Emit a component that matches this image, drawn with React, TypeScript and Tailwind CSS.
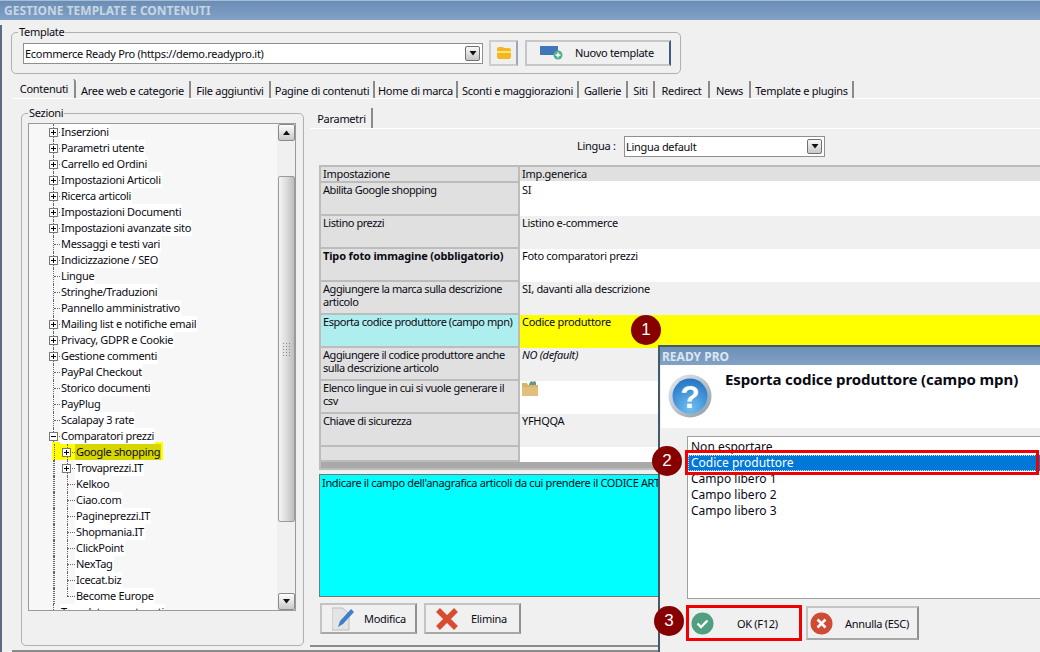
const treeItems = [
  { label: "Inserzioni", box: "plus" },
  { label: "Parametri utente", box: "plus" },
  { label: "Carrello ed Ordini", box: "plus" },
  { label: "Impostazioni Articoli", box: "plus" },
  { label: "Ricerca articoli", box: "plus" },
  { label: "Impostazioni Documenti", box: "plus" },
  { label: "Impostazioni avanzate sito", box: "plus" },
  { label: "Messaggi e testi vari" },
  { label: "Indicizzazione / SEO", box: "plus" },
  { label: "Lingue" },
  { label: "Stringhe/Traduzioni" },
  { label: "Pannello amministrativo" },
  { label: "Mailing list e notifiche email", box: "plus" },
  { label: "Privacy, GDPR e Cookie", box: "plus" },
  { label: "Gestione commenti", box: "plus" },
  { label: "PayPal Checkout" },
  { label: "Storico documenti" },
  { label: "PayPlug" },
  { label: "Scalapay 3 rate" },
  { label: "Comparatori prezzi", box: "minus" },
  { label: "Google shopping", box: "plus", child: true, mark: true },
  { label: "Trovaprezzi.IT", box: "plus", child: true },
  { label: "Kelkoo", child: true },
  { label: "Ciao.com", child: true },
  { label: "Pagineprezzi.IT", child: true },
  { label: "Shopmania.IT", child: true },
  { label: "ClickPoint", child: true },
  { label: "NexTag", child: true },
  { label: "Icecat.biz", child: true },
  { label: "Become Europe", child: true, last: true },
  { label: "Template e contenuti" },
];

const topTabs = [
  { label: "Aree web e categorie", w: "w-[115px]" },
  { label: "File aggiuntivi", w: "w-[80px]" },
  { label: "Pagine di contenuti", w: "w-[104px]" },
  { label: "Home di marca", w: "w-[83px]" },
  { label: "Sconti e maggiorazioni", w: "w-[121px]" },
  { label: "Gallerie", w: "w-[49px]" },
  { label: "Siti", w: "w-[27px]" },
  { label: "Redirect", w: "w-[55px]" },
  { label: "News", w: "w-[41px]" },
  { label: "Template e plugins", w: "w-[103px]" },
];

function TreeBox({ kind }: { kind: string }) {
  return (
    <span className="absolute left-[-5px] top-[4px] z-10 flex h-[9px] w-[9px] items-center justify-center border border-[#777] bg-white">
      <span className="absolute h-px w-[5px] bg-black" />
      {kind === "plus" && <span className="absolute h-[5px] w-px bg-black" />}
    </span>
  );
}

function TreeRow({ item }: { item: (typeof treeItems)[number] }) {
  return (
    <div className="relative flex h-4 shrink-0 bg-[#f7f7f7] pl-[24px]">
      <div className="w-[1px] shrink-0 border-l border-dotted border-[#666]" />
      {item.mark && (
        <div className="absolute left-[23px] top-[-2px] h-[19px] w-[111px] bg-[#ffff00]" />
      )}
      <div className="relative z-10 flex">
        {item.child ? (
          <>
            <div className="w-[13px] border-l border-dotted border-[#666]" />
            <div className={"relative w-[8px] " + (item.last ? "h-2" : "")}>
              <div className="absolute left-0 top-0 h-full border-l border-dotted border-[#666]" />
              <div className="absolute left-0 top-2 w-[8px] border-t border-dotted border-[#666]" />
              {item.box && <TreeBox kind={item.box} />}
            </div>
          </>
        ) : (
          <div className="relative w-[6px]">
            <div className="absolute left-0 top-2 w-[6px] border-t border-dotted border-[#666]" />
            {item.box && <TreeBox kind={item.box} />}
          </div>
        )}
        <span
          className={
            "h-4 px-[1px] text-[11px] leading-[16px] " +
            (item.mark ? "bg-[#d6d600]" : "bg-white")
          }
        >
          {item.label}
        </span>
      </div>
    </div>
  );
}

function Arrow({ down }: { down?: boolean }) {
  return (
    <svg width="9" height="5" viewBox="0 0 9 5">
      <path d={down ? "M1 0h7L4.5 4.5z" : "M1 5h7L4.5.5z"} fill="#111" />
    </svg>
  );
}

function ScrollButton({ down }: { down?: boolean }) {
  return (
    <div className="flex h-[17px] w-[17px] shrink-0 items-center justify-center rounded-[2px] border border-[#8a8a8a] bg-gradient-to-b from-[#fdfdfd] to-[#c9c9c9]">
      <Arrow down={down} />
    </div>
  );
}

function Scrollbar() {
  return (
    <div className="flex w-[18px] shrink-0 flex-col bg-[#f0f0f0] pl-px">
      <ScrollButton />
      <div className="h-[35px] shrink-0" />
      <div className="relative flex h-[346px] shrink-0 items-center justify-center rounded-[2px] border border-[#9a9a9a] bg-gradient-to-r from-[#f4f4f4] via-[#dcdcdc] to-[#bdbdbd]">
        <div className="grid grid-cols-3 gap-[2px]">
          {Array.from({ length: 15 }).map((_, i) => (
            <span key={i} className="h-px w-px bg-[#888]" />
          ))}
        </div>
      </div>
      <div className="flex-1" />
      <ScrollButton down />
    </div>
  );
}

function Combo({ text, className }: { text: string; className: string }) {
  return (
    <div className={"flex items-center justify-between border border-[#8e8f8f] bg-white pl-[1px] pr-[2px] " + className}>
      <span className="text-[11px] leading-none">{text}</span>
      <div className="flex h-[15px] w-[15px] items-center justify-center rounded-[2px] border border-[#707070] bg-gradient-to-b from-[#f8f8f8] to-[#c8c8c8]">
        <svg width="8" height="5" viewBox="0 0 8 5">
          <path d="M.5 0h7L4 4.5z" fill="#111" />
        </svg>
      </div>
    </div>
  );
}

function Badge({ n, className }: { n: number; className: string }) {
  return (
    <div
      className={
        "absolute z-30 flex h-[30px] w-[30px] items-center justify-center rounded-full bg-[#860000] font-['Liberation_Sans',sans-serif] text-[17px] tracking-normal text-white " +
        className
      }
    >
      {n}
    </div>
  );
}

const rows = [
  { a: "Abilita Google shopping", b: "SI", bg: "bg-white" },
  { a: "Listino prezzi", b: "Listino e-commerce", bg: "bg-[#f0f0f0]" },
  { a: "Tipo foto immagine (obbligatorio)", b: "Foto comparatori prezzi", bg: "bg-white", bold: true },
  { a: "Aggiungere la marca sulla descrizione articolo", b: "SI, davanti alla descrizione", bg: "bg-[#f0f0f0]" },
  { a: "Esporta codice produttore (campo mpn)", b: "Codice produttore", bg: "bg-[#ffff00]", on: true },
  { a: "Aggiungere il codice produttore anche sulla descrizione articolo", b: "NO (default)", bg: "bg-[#f0f0f0]", italic: true },
  { a: "Elenco lingue in cui si vuole generare il csv", b: "", bg: "bg-white", folder: true },
  { a: "Chiave di sicurezza", b: "YFHQQA", bg: "bg-[#f0f0f0]" },
];

function FolderTools() {
  return (
    <svg width="16" height="15" viewBox="0 0 16 15">
      <path d="M7 3l2-3 2 1 1-1 2 1v3H7z" fill="#5e9a8e" />
      <path d="M0 2h5l1 2h10v11H0z" fill="#d9b26c" />
      <path d="M0 6h16v9H0z" fill="#e3bf7c" />
    </svg>
  );
}

function ParamTable() {
  return (
    <div className="w-[740px] border-2 border-[#bcbcbc] bg-[#bcbcbc]">
      <div className="grid grid-cols-[199px_1fr]">
        <div className="h-[16px] border-r-2 border-b-2 border-[#bcbcbc] bg-[#e0e0e0] pl-[2px] leading-[13px]">Impostazione</div>
        <div className="h-[16px] border-b-2 border-white bg-[#e0e0e0] pl-[2px] leading-[13px]">Imp.generica</div>
        {rows.map((r) => (
          <div key={r.a} className="contents">
            <div
              className={
                "h-[33px] border-r-2 border-b-2 border-[#bcbcbc] pl-[2px] leading-[13px] " +
                (r.on ? "bg-[#afeeee] " : "bg-[#e0e0e0] ") +
                (r.bold ? "font-bold tracking-[-0.15px]" : "tracking-[-0.45px]")
              }
            >
              {r.a}
            </div>
            <div className={"h-[33px] pl-[2px] leading-[13px] " + r.bg + (r.italic ? " italic" : "")}>
              {r.folder ? <FolderTools /> : r.b}
            </div>
          </div>
        ))}
        <div className="h-[15px] border-r-2 border-b-2 border-[#bcbcbc] bg-[#e0e0e0]" />
        <div className="h-[15px] bg-white" />
      </div>
      <div className="h-[6px] bg-[#a9a9a9]" />
    </div>
  );
}

function PushButton({ label, icon, className, textClass }: { label: string; icon: React.ReactNode; className: string; textClass: string }) {
  return (
    <div className={"flex items-center border-2 border-[#c4c4c4] border-r-[#8f8f8f] border-b-[#a8a8a8] bg-[#f0f0f0] " + className}>
      {icon}
      <span className={"text-[11px] leading-none " + textClass}>{label}</span>
    </div>
  );
}

function GroupBox({ title, className, children }: { title: string; className: string; children: React.ReactNode }) {
  return (
    <fieldset className={"rounded-[5px] border border-[#b0b0b0] " + className}>
      <legend className="ml-[6px] px-[1px] text-[11px] leading-[14px]">{title}</legend>
      {children}
    </fieldset>
  );
}

function QuestionIcon() {
  return (
    <svg width="44" height="44" viewBox="0 0 44 44">
      <defs>
        <linearGradient id="ring" x1="0" y1="0" x2="1" y2="1">
          <stop offset="0" stopColor="#e8edf2" />
          <stop offset="1" stopColor="#8b9aa8" />
        </linearGradient>
        <radialGradient id="ball" cx="0.5" cy="0.85" r="0.9">
          <stop offset="0" stopColor="#6fc0f2" />
          <stop offset="1" stopColor="#1f6fc2" />
        </radialGradient>
      </defs>
      <circle cx="22" cy="22" r="21.5" fill="url(#ring)" />
      <circle cx="22" cy="22" r="17.5" fill="url(#ball)" />
      <text x="22" y="34" textAnchor="middle" fontSize="32" fontWeight="700" fill="#fff" style={{ fontFamily: "'Liberation Sans', sans-serif" }}>
        ?
      </text>
    </svg>
  );
}

function Dialog() {
  return (
    <div className="absolute left-[658px] top-[345px] z-20 flex h-[320px] w-[400px] flex-col border-l-2 border-t-2 border-[#46596b] bg-[#f0f0f0] tracking-normal">
      <div className="flex h-[18px] shrink-0 items-center bg-gradient-to-b from-[#6c8fb6] to-[#82a2c5] pl-[2px] pt-[2px] text-[12px] font-bold text-[#dbe6f0]">
        READY PRO
      </div>
      <div className="ml-[1px] flex h-[63px] shrink-0 bg-white">
        <div className="ml-[7px] mt-[9px]">
          <QuestionIcon />
        </div>
        <div className="ml-[13px] mt-[5px] text-[15px] font-bold leading-[18px] tracking-[-0.1px]">Esporta codice produttore (campo mpn)</div>
      </div>
      <div className="relative ml-[27px] mt-[8px] h-[163px] shrink-0 border border-[#a0a0a0] bg-white pt-[2px] text-[12px]">
        <div className="h-4 pl-[3px] leading-[16px]">Non esportare</div>
        <div className="h-4 border border-dotted border-[#d0e4f8] bg-[#0078d7] pl-[2px] leading-[14px] text-white">Codice produttore</div>
        <div className="h-4 pl-[3px] leading-[16px]">Campo libero 1</div>
        <div className="h-4 pl-[3px] leading-[16px]">Campo libero 2</div>
        <div className="h-4 pl-[3px] leading-[16px]">Campo libero 3</div>
        <div className="absolute left-[-3px] top-[13px] h-[25px] w-[354px] border-[3px] border-[#f00000]" />
      </div>
      <div className="ml-[26px] mt-[6px] flex items-center tracking-[-0.3px]">
        <div className="border-[3px] border-[#f00000]">
          <div className="flex h-[30px] w-[110px] items-center bg-[#f0f0f0] pl-[2px]">
            <svg width="23" height="23" viewBox="0 0 23 23">
              <circle cx="11.5" cy="11.5" r="11" fill="#4f9f80" />
              <path d="M6.5 11.5l3.5 3.5 6.5-6.5" fill="none" stroke="#fff" strokeWidth="2.4" />
            </svg>
            <span className="ml-[23px] text-[11px] leading-none">OK (F12)</span>
          </div>
        </div>
        <PushButton
          className="ml-[4px] h-[34px] w-[113px] pl-[2px]"
          textClass="ml-[12px]"
          label="Annulla (ESC)"
          icon={
            <svg width="23" height="23" viewBox="0 0 23 23">
              <circle cx="11.5" cy="11.5" r="11" fill="#cf4b33" />
              <path d="M7.5 7.5l8 8M15.5 7.5l-8 8" fill="none" stroke="#fff" strokeWidth="2.6" />
            </svg>
          }
        />
      </div>
    </div>
  );
}

export default function App() {
  return (
    <div className="relative h-[652px] w-[1040px] overflow-hidden bg-[#f0f0f0] font-['Noto_Sans',sans-serif] text-[11px] tracking-[-0.3px] text-[#0a0a14]">
      <div className="h-px bg-[#a8bcd2]" />
      <div className="flex h-[19px] items-center bg-gradient-to-b from-[#6a8db5] to-[#82a2c5] pl-[4px] text-[12px] font-bold tracking-normal text-[#c8d6e4]">
        GESTIONE TEMPLATE E CONTENUTI
      </div>
      <div className="h-[632px] border-l-2 border-[#5c6b80]">
        {/* template selector */}
        <GroupBox title="Template" className="ml-[9px] mt-[5px] h-[49px] w-[670px]">
          <div className="flex h-[33px] items-start pl-[11px] pt-px">
            <Combo text="Ecommerce Ready Pro (https://demo.readypro.it)" className="mt-[3px] h-[21px] w-[460px]" />
            <div className="ml-[6px] flex h-[26px] w-[29px] items-center justify-center border-2 border-[#cdcdcd] border-r-[#9ba8b8]">
              <svg width="16" height="12" viewBox="0 0 16 12">
                <path d="M1 2q0-2 2-2h4l1 1h5q2 0 2 2v7q0 2-2 2H3q-2 0-2-2z" fill="#f5b81c" />
                <path d="M1 4h14v2H1z" fill="#fbe08a" />
              </svg>
            </div>
            <div className="ml-[7px] flex h-[26px] w-[146px] items-center border-2 border-[#c6c6c6] border-r-[#3f5a80] pl-[13px]">
              <svg width="23" height="14" viewBox="0 0 23 14">
                <path d="M0 0h18v9H0z" fill="#3f76b8" />
                <circle cx="18" cy="9" r="4.5" fill="#4fae8d" />
                <path d="M15.5 9h5M18 6.5v5" stroke="#fff" strokeWidth="1.4" />
              </svg>
              <span className="ml-[12px]">Nuovo template</span>
            </div>
          </div>
        </GroupBox>

        {/* main tabs */}
        <div className="ml-[10px] mt-[5px] flex h-[20px] items-end border-b border-white">
          <div className="flex h-[19px] w-[64px] items-center justify-center rounded-t-[3px] border-r-2 border-[#8a8a8a] pl-[2px] pt-[1px]">
            Contenuti
          </div>
          {topTabs.map((t) => (
            <div key={t.label} className={"flex h-[17px] shrink-0 items-center justify-center border-r-2 border-[#8a8a8a] pt-[3px] " + t.w}>
              {t.label}
            </div>
          ))}
        </div>

        <div className="ml-[10px] flex h-[553px] border-b-2 border-[#8a8a8a]">
          {/* sections tree */}
          <GroupBox title="Sezioni" className="ml-[9px] mt-[7px] h-[540px] w-[283px] shrink-0">
            <div className="ml-[6px] mt-[3px] flex h-[488px] w-[268px] overflow-hidden border border-[#9a9a9a] bg-white">
              <div className="flex flex-1 flex-col overflow-hidden pl-0">
                {treeItems.map((item) => (
                  <TreeRow key={item.label} item={item} />
                ))}
              </div>
              <Scrollbar />
            </div>
          </GroupBox>

          {/* parameters page */}
          <div className="ml-[6px] mt-[9px] flex h-[539px] flex-1 flex-col overflow-hidden border-b-2 border-[#8a8a8a]">
            <div className="flex h-[21px] shrink-0 border-b border-white">
              <div className="flex h-[20px] w-[63px] items-center justify-center border-r-2 border-[#8a8a8a] pl-[2px] pt-[2px]">Parametri</div>
            </div>
            <div className="mt-[7px] flex h-[21px] shrink-0 items-center pl-[267px]">
              <span className="w-[47px]">Lingua :</span>
              <Combo text="Lingua default" className="h-[21px] w-[201px]" />
            </div>
            <div className="ml-[9px] mt-[8px] shrink-0">
              <ParamTable />
            </div>
            <div className="ml-[9px] mt-[4px] h-[123px] w-[740px] shrink-0 border border-[#777] bg-[#00ffff] pl-[2px] pt-[1px] leading-[13px] tracking-[-0.35px]">
              Indicare il campo dell'anagrafica articoli da cui prendere il CODICE ART.
            </div>
            <div className="ml-[10px] mt-[6px] flex">
              <PushButton
                className="h-[31px] w-[97px] pl-[10px]"
                textClass="ml-[8px]"
                label="Modifica"
                icon={
                  <svg width="24" height="24" viewBox="0 0 24 24">
                    <path d="M0 1h11l6 6v16H0z" fill="#e4e4e4" stroke="#bdbdbd" />
                    <path d="M6 20l2-6L19 2l3 3-11 12z" fill="#3f7fc8" />
                  </svg>
                }
              />
              <PushButton
                className="ml-[7px] h-[31px] w-[97px] pl-[9px]"
                textClass="ml-[12px]"
                label="Elimina"
                icon={
                  <svg width="24" height="24" viewBox="0 0 24 24">
                    <path d="M3 3l18 18M21 3L3 21" stroke="#d84c30" strokeWidth="5.5" />
                  </svg>
                }
              />
            </div>
          </div>
        </div>
      </div>

      <Dialog />
      <Badge n={1} className="left-[631px] top-[315px]" />
      <Badge n={2} className="left-[652px] top-[446px]" />
      <Badge n={3} className="left-[654px] top-[606px]" />
    </div>
  );
}
